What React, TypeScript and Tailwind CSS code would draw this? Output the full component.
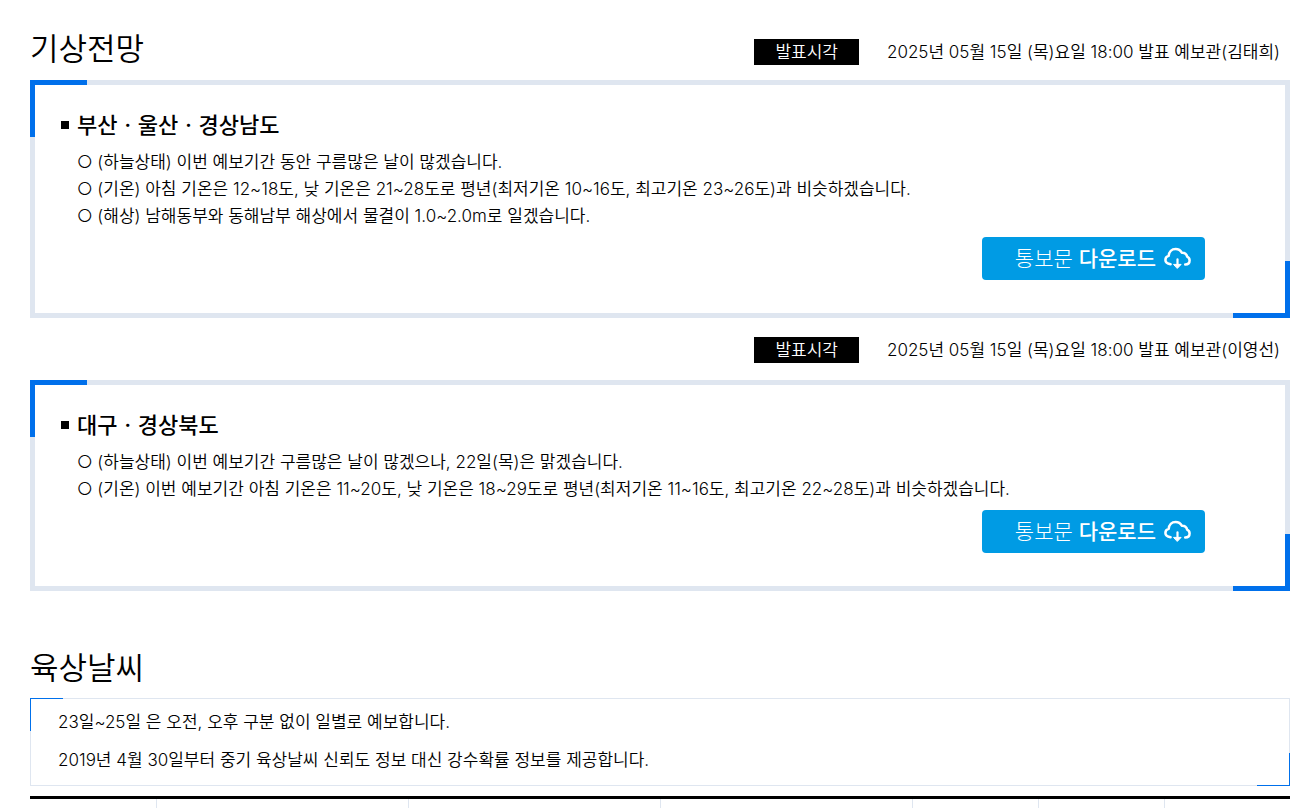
import { FC } from "react";

type Outlook = {
  region: string;
  announced: string;
  lines: string[];
};

const outlooks: Outlook[] = [
  {
    region: "부산ㆍ울산ㆍ경상남도",
    announced: "2025년 05월 15일 (목)요일 18:00 발표 예보관(김태희)",
    lines: [
      "(하늘상태) 이번 예보기간 동안 구름많은 날이 많겠습니다.",
      "(기온) 아침 기온은 12~18도, 낮 기온은 21~28도로 평년(최저기온 10~16도, 최고기온 23~26도)과 비슷하겠습니다.",
      "(해상) 남해동부와 동해남부 해상에서 물결이 1.0~2.0m로 일겠습니다.",
    ],
  },
  {
    region: "대구ㆍ경상북도",
    announced: "2025년 05월 15일 (목)요일 18:00 발표 예보관(이영선)",
    lines: [
      "(하늘상태) 이번 예보기간 구름많은 날이 많겠으나, 22일(목)은 맑겠습니다.",
      "(기온) 이번 예보기간 아침 기온은 11~20도, 낮 기온은 18~29도로 평년(최저기온 11~16도, 최고기온 22~28도)과 비슷하겠습니다.",
    ],
  },
];

const CloudDownloadIcon: FC = () => (
  <svg
    xmlns="http://www.w3.org/2000/svg"
    viewBox="0 0 27 23"
    fill="none"
    stroke="currentColor"
    strokeWidth="2.5"
    strokeLinecap="round"
    strokeLinejoin="round"
    className="w-[27px] h-[23px]"
  >
    <path d="M6.6 17.3C3.6 16.6 1.4 15.3 1.4 12.9c0-2.2 1.4-3.6 3.3-4C5 4.8 7.8 2 11.6 2c2.9 0 5 1.4 6.2 3.7 2.9-.3 5.1 1.5 5.3 4 1.6.8 2.5 2.1 2.5 3.7 0 2.6-1.8 4-4.4 4" />
    <path d="M13.5 12.4v5" strokeWidth="2.2" />
    <path d="M9.9 17.4h7.2l-3.6 3.8z" fill="currentColor" strokeWidth="1" />
  </svg>
);

const Announced: FC<{ text: string }> = ({ text }) => (
  <div className="flex items-center justify-end gap-7 pr-[10px] text-[17px] leading-[26px]">
    <span className="bg-black px-[21px] text-white">발표시각</span>
    <span>{text}</span>
  </div>
);

const OutlookBox: FC<{ outlook: Outlook }> = ({ outlook }) => (
  <article className="relative border-[5px] border-[#dfe6f0] px-[26px] pt-6 pb-[33px]">
    <span className="absolute -top-[5px] -left-[5px] size-[57px] border-t-[5px] border-l-[5px] border-[#0070eb]" />
    <span className="absolute -right-[5px] -bottom-[5px] size-[57px] border-r-[5px] border-b-[5px] border-[#0070eb]" />
    <h3 className="flex items-center gap-2 text-[22px] leading-8 font-medium">
      <span className="size-2 bg-black" />
      {outlook.region}
    </h3>
    <ul className="mt-2 ml-4 text-[17px] leading-[27px]">
      {outlook.lines.map((line) => (
        <li key={line}>○ {line}</li>
      ))}
    </ul>
    <div className="mt-[7px] mr-[54px] flex justify-end">
      <button
        type="button"
        className="flex h-[43px] cursor-pointer items-center gap-2 rounded bg-[#009be4] pr-[14px] pl-[33px] text-[21px] font-light text-white"
      >
        <span>
          통보문 <strong className="font-medium">다운로드</strong>
        </span>
        <CloudDownloadIcon />
      </button>
    </div>
  </article>
);

const App: FC = () => {
  return (
    <main className="overflow-hidden bg-white pr-[10px] pl-[30px] font-[Inter,'Noto_Sans_CJK_KR',sans-serif] font-[350] text-black">
      <section>
        <div className="flex items-end justify-between pt-7">
          <h2 className="pb-[11px] text-[31px] leading-[41px]">기상전망</h2>
          <div className="pb-[15px]">
            <Announced text={outlooks[0].announced} />
          </div>
        </div>
        <OutlookBox outlook={outlooks[0]} />
        <div className="pt-[19px] pb-[17px]">
          <Announced text={outlooks[1].announced} />
        </div>
        <OutlookBox outlook={outlooks[1]} />
      </section>

      <section className="mt-14">
        <h2 className="text-[31px] leading-[41px]">육상날씨</h2>
        <div className="relative mt-[10px] border border-[#dfe6f0] px-[27px] pt-1 pb-[6px] text-[17px] leading-[38px]">
          <span className="absolute -top-px -left-px size-[33px] border-t border-l border-[#0070eb]" />
          <span className="absolute -right-px -bottom-px size-[33px] border-r border-b border-[#0070eb]" />
          <p>23일~25일 은 오전, 오후 구분 없이 일별로 예보합니다.</p>
          <p>2019년 4월 30일부터 중기 육상날씨 신뢰도 정보 대신 강수확률 정보를 제공합니다.</p>
        </div>
        <table className="mt-[10px] w-full table-fixed border-t-[3px] border-black">
          <thead>
            <tr className="h-[10px] divide-x divide-[#dfe6f0]">
              <th className="w-1/10" />
              <th className="w-1/5" />
              <th className="w-1/5" />
              <th className="w-1/5" />
              <th className="w-1/10" />
              <th className="w-1/10" />
              <th className="w-1/10" />
            </tr>
          </thead>
        </table>
      </section>
    </main>
  );
};

export default App;
